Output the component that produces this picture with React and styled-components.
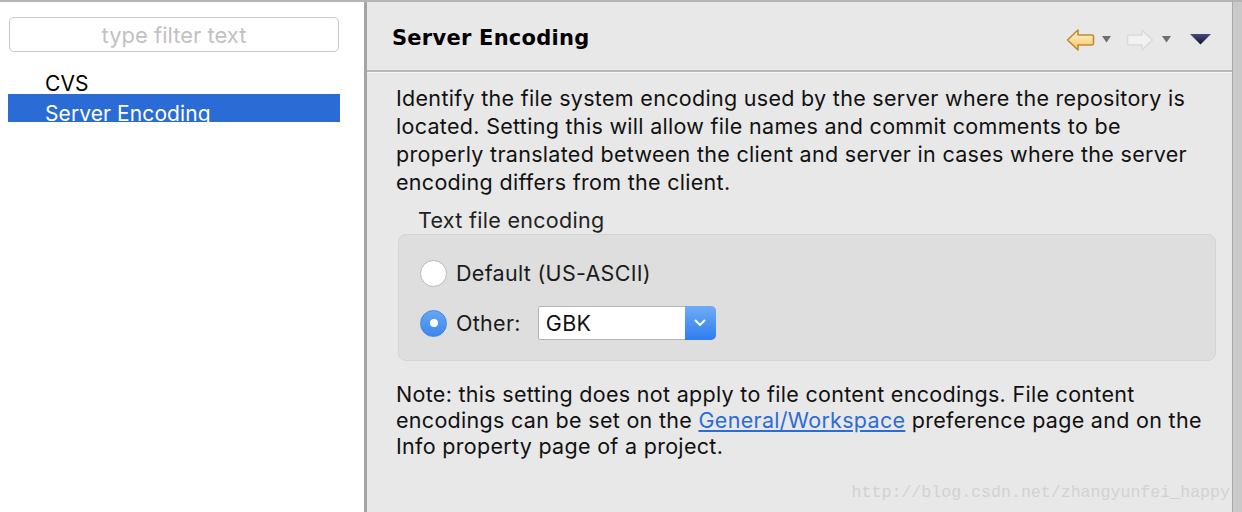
import React from 'react';
import styled, {createGlobalStyle} from 'styled-components';

const Global = createGlobalStyle`
  html, body { margin: 0; padding: 0; }
  body { width: 1242px; height: 512px; overflow: hidden; background: #e8e8e8; }
`;

const Page = styled.div`
  display: flex;
  width: 1242px;
  height: 512px;
  box-sizing: border-box;
  border-top: 2px solid #b4b4b4;
  font-family: Inter, "Liberation Sans", Arial, sans-serif;
  color: #111;
`;

const Sidebar = styled.div`
  width: 364px;
  background: #fff;
  display: flex;
  flex-direction: column;
  padding: 15px 24px 0 8px;
  box-sizing: border-box;
`;

const Filter = styled.input`
  margin-left: 1px;
  width: 330px;
  height: 35px;
  box-sizing: border-box;
  border: 1px solid #c8c8c8;
  border-radius: 5px;
  font: 22px Inter, "Liberation Sans", Arial, sans-serif;
  padding-top: 2px;
  text-align: center;
  outline: none;
  &::placeholder { color: #c2c2c2; }
`;

const Tree = styled.div`
  margin-top: 12px;
  display: flex;
  flex-direction: column;
  gap: 2px;
`;

const TreeItem = styled.div`
  height: 28px;
  box-sizing: border-box;
  padding: 6px 0 0 37px;
  line-height: 28px;
  font-size: 21px;
  letter-spacing: 0.1px;
  white-space: nowrap;
  overflow: ${p => (p.selected ? 'hidden' : 'visible')};
  background: ${p => (p.selected ? '#2a6bd5' : 'transparent')};
  color: ${p => (p.selected ? '#fff' : '#000')};
`;

const Sash = styled.div`
  width: 3px;
  background: #a4a4a4;
`;

const Main = styled.div`
  position: relative;
  width: 865px;
  display: flex;
  flex-direction: column;
  background: #e8e8e8;
`;

const Edge = styled.div`
  width: 10px;
  box-sizing: border-box;
  border-left: 1px solid #a8a8a8;
  background: #c9c9c9;
`;

const Header = styled.div`
  height: 70px;
  box-sizing: border-box;
  border-bottom: 2px solid #b9b9b9;
  box-shadow: 0 1px 0 #f6f6f6;
  display: flex;
  align-items: center;
  justify-content: space-between;
  padding: 4px 21px 0 25px;
`;

const Title = styled.div`
  font-family: "DejaVu Sans", Verdana, sans-serif;
  font-weight: bold;
  font-size: 21px;
  letter-spacing: 0.25px;
  color: #000;
`;

const Tools = styled.div`
  display: flex;
  align-items: center;
  padding-top: 3px;
`;

const ToolIcon = styled.svg`
  display: block;
  margin-left: ${p => p.gap || 0}px;
`;

const Content = styled.div`
  padding: 12px 16px 0 29px;
  font-size: 21.5px;
  letter-spacing: 0.3px;
  line-height: 28px;
  color: #111;
`;

const Para = styled.p`
  margin: 0;
`;

const GroupLabel = styled.div`
  margin: 10px 0 0 22px;
  color: #222;
`;

const Group = styled.div`
  margin-left: 2px;
  height: 127px;
  box-sizing: border-box;
  border: 1px solid #d4d4d4;
  border-radius: 8px;
  background: #dedede;
  padding: 20px 0 0 21px;
  display: flex;
  flex-direction: column;
  gap: 14px;
`;

const RadioRow = styled.label`
  display: flex;
  align-items: center;
  height: 36px;
  color: #1a1a1a;
`;

const Radio = styled.span`
  width: 27px;
  height: 27px;
  box-sizing: border-box;
  border-radius: 50%;
  margin-right: 9px;
  display: flex;
  align-items: center;
  justify-content: center;
  background: ${p => (p.checked ? 'linear-gradient(#68a6f3, #3b87ee)' : '#fff')};
  border: 1px solid ${p => (p.checked ? '#3f87e6' : '#b8b8b8')};
  &::after {
    content: '';
    display: ${p => (p.checked ? 'block' : 'none')};
    width: 8px;
    height: 8px;
    border-radius: 50%;
    background: #fff;
  }
`;

const Combo = styled.div`
  margin-left: 17px;
  width: 178px;
  height: 34px;
  box-sizing: border-box;
  display: flex;
  background: #fff;
  border: 1px solid #b4b4b4;
  border-radius: 2px 5px 5px 2px;
`;

const ComboValue = styled.div`
  flex: 1;
  padding-left: 7px;
  line-height: 32px;
  color: #111;
`;

const ComboButton = styled.div`
  width: 31px;
  margin: -1px -1px -1px 0;
  border-radius: 0 5px 5px 0;
  background: linear-gradient(#70acf6, #2f7df0);
  display: flex;
  align-items: center;
  justify-content: center;
`;

const Note = styled.p`
  margin: 20px 0 0;
  line-height: 26px;
`;

const Link = styled.a`
  color: #2b6cd6;
  text-decoration: underline;
`;

const Watermark = styled.div`
  position: absolute;
  right: 2px;
  bottom: 10px;
  font-family: "Liberation Mono", "Courier New", monospace;
  font-size: 16.6px;
  color: #d2d2d2;
`;

const SmallDrop = ({gap}) => (
  <ToolIcon gap={gap} width="9" height="7" viewBox="0 0 9 7">
    <polygon points="0,0 9,0 4.5,6.5" fill="#6f6f6f" />
  </ToolIcon>
);

const App = () => (
  <Page>
    <Global />
    <Sidebar>
      <Filter placeholder="type filter text" />
      <Tree>
        <TreeItem>CVS</TreeItem>
        <TreeItem selected>Server Encoding</TreeItem>
      </Tree>
    </Sidebar>
    <Sash />
    <Main>
      <Header>
        <Title>Server Encoding</Title>
        <Tools>
          <ToolIcon width="29" height="24" viewBox="0 0 29 24">
            <defs>
              <linearGradient id="back" x1="0" y1="0" x2="0" y2="1">
                <stop offset="0" stopColor="#fff7d6" />
                <stop offset="1" stopColor="#f3c45c" />
              </linearGradient>
            </defs>
            <path d="M1.5 12 L12 2 L12 7 L26 7 Q27.5 7 27.5 8.5 L27.5 15.5 Q27.5 17 26 17 L12 17 L12 22 Z"
              fill="url(#back)" stroke="#bf8a36" strokeWidth="1.6" strokeLinejoin="round" />
          </ToolIcon>
          <SmallDrop gap={7} />
          <ToolIcon gap={15} width="28" height="24" viewBox="0 0 28 24">
            <path d="M26.5 12 L16 2 L16 7 L3 7 Q1.5 7 1.5 8.5 L1.5 15.5 Q1.5 17 3 17 L16 17 L16 22 Z"
              fill="#f1f1f1" stroke="#dadada" strokeWidth="1.6" strokeLinejoin="round" />
          </ToolIcon>
          <SmallDrop gap={8} />
          <ToolIcon gap={19} width="21" height="11" viewBox="0 0 21 11">
            <defs>
              <linearGradient id="menu" x1="0" y1="0" x2="0" y2="1">
                <stop offset="0" stopColor="#4a4880" />
                <stop offset="1" stopColor="#15142a" />
              </linearGradient>
            </defs>
            <polygon points="0,0 21,0 10.5,10.5" fill="url(#menu)" />
          </ToolIcon>
        </Tools>
      </Header>
      <Content>
        <Para>
          Identify the file system encoding used by the server where the repository is<br />
          located. Setting this will allow file names and commit comments to be<br />
          properly translated between the client and server in cases where the server<br />
          encoding differs from the client.
        </Para>
        <GroupLabel>Text file encoding</GroupLabel>
        <Group>
          <RadioRow>
            <Radio />
            Default (US-ASCII)
          </RadioRow>
          <RadioRow>
            <Radio checked />
            Other:
            <Combo>
              <ComboValue>GBK</ComboValue>
              <ComboButton>
                <svg width="12" height="8" viewBox="0 0 12 8">
                  <path d="M1.5 1.5 L6 6 L10.5 1.5" fill="none" stroke="#fff" strokeWidth="2" strokeLinecap="round" strokeLinejoin="round" />
                </svg>
              </ComboButton>
            </Combo>
          </RadioRow>
        </Group>
        <Note>
          Note: this setting does not apply to file content encodings. File content<br />
          encodings can be set on the <Link>General/Workspace</Link> preference page and on the<br />
          Info property page of a project.
        </Note>
      </Content>
      <Watermark>http://blog.csdn.net/zhangyunfei_happy</Watermark>
    </Main>
    <Edge />
  </Page>
);

export default App;
